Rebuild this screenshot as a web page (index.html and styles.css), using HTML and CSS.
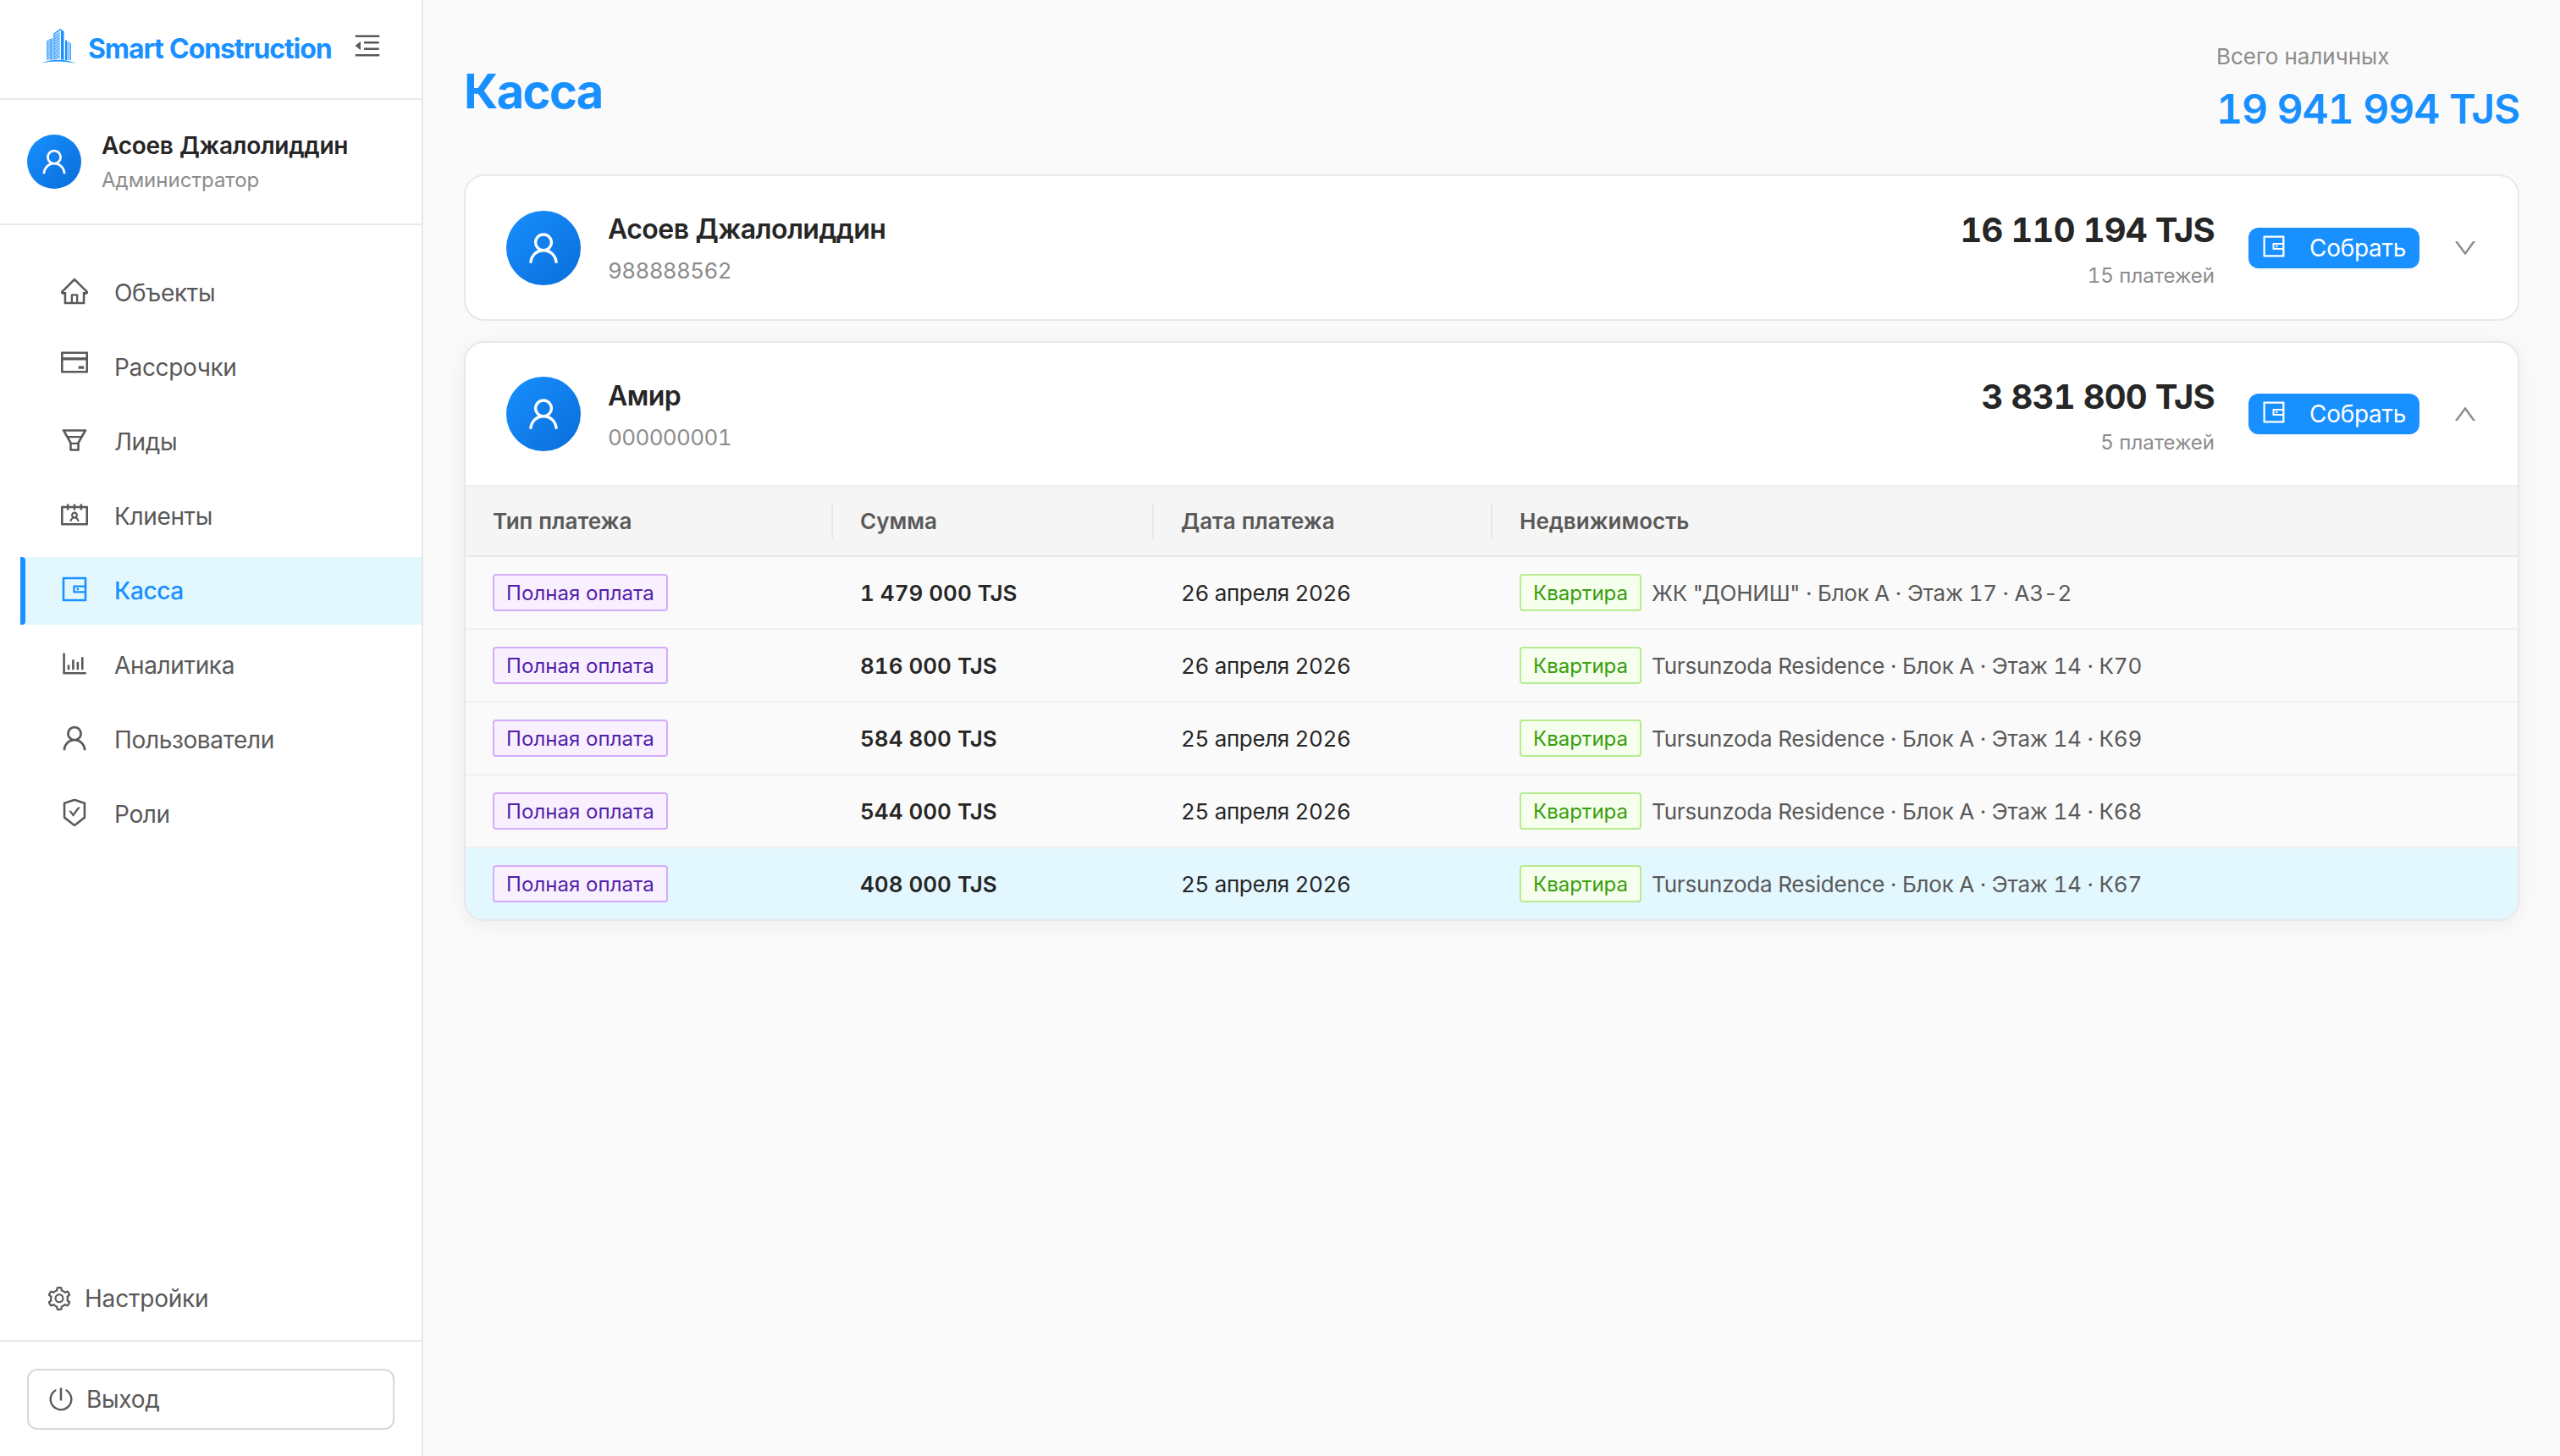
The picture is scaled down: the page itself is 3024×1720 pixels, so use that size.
FILE: index.html
```html
<!DOCTYPE html>
<html lang="ru">
<head>
    <meta charset="UTF-8">
    <meta name="viewport" content="width=device-width, initial-scale=1.0">
    <title>Smart Construction - Касса</title>
    <link rel="stylesheet" href="styles.css">
</head>
<body>

    <!-- иконки -->
    <svg class="sprite" width="0" height="0">
        <symbol id="i-fold" viewBox="64 64 896 896"><path d="M408 442h480c4.400 0 8-3.600 8-8v-56c0-4.400-3.600-8-8-8H408c-4.400 0-8 3.600-8 8v56c0 4.400 3.600 8 8 8zm-8 204c0 4.400 3.600 8 8 8h480c4.400 0 8-3.600 8-8v-56c0-4.400-3.600-8-8-8H408c-4.400 0-8 3.600-8 8v56zm504-486H120c-4.400 0-8 3.600-8 8v56c0 4.400 3.600 8 8 8h784c4.400 0 8-3.600 8-8v-56c0-4.400-3.600-8-8-8zm0 632H120c-4.400 0-8 3.600-8 8v56c0 4.400 3.600 8 8 8h784c4.400 0 8-3.600 8-8v-56c0-4.400-3.600-8-8-8zM115.400 518.900L271.700 642c5.800 4.600 14.400.5 14.400-6.900V388.900c0-7.400-8.500-11.500-14.400-6.900L115.400 505.100a8.740 8.740 0 000 13.800z"/></symbol>
        <symbol id="i-home" viewBox="64 64 896 896"><path d="M946.5 505L560.1 118.8l-25.9-25.9a31.5 31.5 0 00-44.4 0L77.5 505a63.9 63.9 0 00-18.800 46c.4 35.2 29.7 63.3 64.9 63.3h42.5V940h691.8V614.3h43.400c17.100 0 33.200-6.700 45.300-18.800a63.6 63.6 0 0018.700-45.300c0-17-6.700-33.100-18.800-45.200zM568 868H456V664h112v204zm217.900-325.700V868H632V640c0-22.100-17.900-40-40-40H432c-22.100 0-40 17.900-40 40v228H238.100V542.300h-96l370-369.700 23.100 23.100L882 542.300h-96.100z"/></symbol>
        <symbol id="i-card" viewBox="64 64 896 896"><path d="M928 160H96c-17.700 0-32 14.300-32 32v640c0 17.700 14.300 32 32 32h832c17.700 0 32-14.300 32-32V192c0-17.700-14.300-32-32-32zm-792 72h752v120H136V232zm752 560H136V440h752v352zm-237-64h165c4.400 0 8-3.600 8-8v-72c0-4.400-3.600-8-8-8H651c-4.400 0-8 3.600-8 8v72c0 4.400 3.600 8 8 8z"/></symbol>
        <symbol id="i-funnel" viewBox="64 64 896 896"><path d="M880.1 154H143.9c-24.5 0-39.800 26.700-27.500 48L349 607.400V838c0 17.700 14.200 32 31.800 32h262.400c17.600 0 31.800-14.300 31.800-32V607.400L907.700 202c12.200-21.300-3.100-48-27.600-48zM603.400 798H420.600V650h182.900v148zm9.600-226.600l-8.400 14.600H419.300l-8.400-14.600L334.400 438h355.200L613 571.400zM726.300 374H297.700l-85-148h598.600l-85 148z"/></symbol>
        <symbol id="i-contacts" viewBox="64 64 896 896"><path d="M594.3 601.5a111.8 111.8 0 0029.100-75.500c0-61.900-49.900-112-111.400-112s-111.400 50.100-111.400 112c0 29.100 11 55.500 29.100 75.500a158.09 158.09 0 00-74.600 126.100 8 8 0 008 8.400H407c4.200 0 7.600-3.300 7.900-7.500 3.800-50.600 46-90.500 97.200-90.500s93.400 40 97.200 90.500c.3 4.200 3.700 7.500 7.900 7.500H661a8 8 0 008-8.400c-2.800-53.300-32-99.700-74.700-126.100zM512 578c-28.500 0-51.700-23.300-51.700-52s23.200-52 51.700-52 51.700 23.300 51.700 52-23.200 52-51.700 52zm416-354H768v-56c0-4.400-3.600-8-8-8h-56c-4.400 0-8 3.600-8 8v56H548v-56c0-4.400-3.600-8-8-8h-56c-4.400 0-8 3.600-8 8v56H328v-56c0-4.400-3.600-8-8-8h-56c-4.400 0-8 3.600-8 8v56H96c-17.700 0-32 14.300-32 32v576c0 17.700 14.300 32 32 32h832c17.700 0 32-14.300 32-32V256c0-17.700-14.300-32-32-32zm-40 568H136V296h120v56c0 4.400 3.600 8 8 8h56c4.400 0 8-3.600 8-8v-56h148v56c0 4.400 3.600 8 8 8h56c4.400 0 8-3.600 8-8v-56h148v56c0 4.400 3.600 8 8 8h56c4.400 0 8-3.600 8-8v-56h120v496z"/></symbol>
        <symbol id="i-wallet" viewBox="64 64 896 896"><path d="M880 112H144c-17.700 0-32 14.300-32 32v736c0 17.700 14.300 32 32 32h736c17.700 0 32-14.300 32-32V144c0-17.700-14.300-32-32-32zm-40 464H528V448h312v128zm0 264H184V184h656v200H496c-17.700 0-32 14.300-32 32v192c0 17.700 14.300 32 32 32h344v200zM580 512a40 40 0 1080 0 40 40 0 10-80 0z"/></symbol>
        <symbol id="i-chart" viewBox="64 64 896 896"><path d="M888 792H200V168c0-4.400-3.600-8-8-8h-56c-4.400 0-8 3.600-8 8v688c0 4.400 3.600 8 8 8h752c4.400 0 8-3.600 8-8v-56c0-4.400-3.600-8-8-8zm-600-80h56c4.400 0 8-3.600 8-8V560c0-4.400-3.600-8-8-8h-56c-4.400 0-8 3.600-8 8v144c0 4.400 3.600 8 8 8zm152 0h56c4.400 0 8-3.600 8-8V384c0-4.400-3.600-8-8-8h-56c-4.400 0-8 3.600-8 8v320c0 4.400 3.600 8 8 8zm152 0h56c4.400 0 8-3.600 8-8V462c0-4.400-3.600-8-8-8h-56c-4.400 0-8 3.600-8 8v242c0 4.400 3.600 8 8 8zm152 0h56c4.400 0 8-3.600 8-8V304c0-4.400-3.600-8-8-8h-56c-4.400 0-8 3.600-8 8v400c0 4.400 3.600 8 8 8z"/></symbol>
        <symbol id="i-user" viewBox="64 64 896 896"><path d="M858.5 763.6a374 374 0 00-80.600-119.500 375.63 375.63 0 00-119.500-80.600c-.4-.2-.8-.3-1.200-.5C719.5 518 760 444.700 760 362c0-137-111-248-248-248S264 225 264 362c0 82.700 40.500 156 102.800 201.100-.4.2-.8.3-1.200.5-44.800 18.900-85 46-119.500 80.600a375.63 375.63 0 00-80.600 119.500A371.7 371.7 0 00136 901.800a8 8 0 008 8.200h60c4.400 0 7.900-3.500 8-7.800 2-77.200 33-149.500 87.800-204.300 56.700-56.700 132-87.900 212.200-87.900s155.500 31.200 212.200 87.900C779 752.700 810 825 812 902.200c.1 4.400 3.600 7.800 8 7.800h60a8 8 0 008-8.200c-1-47.800-10.900-94.300-29.500-138.200zM512 534c-45.900 0-89.100-17.900-121.600-50.400S340 407.900 340 362c0-45.900 17.900-89.100 50.400-121.600S466.100 190 512 190s89.100 17.900 121.600 50.400S684 316.100 684 362c0 45.900-17.900 89.100-50.400 121.600S557.900 534 512 534z"/></symbol>
        <symbol id="i-shield" viewBox="64 64 896 896"><path d="M866.9 169.9L527.1 54.1C523 52.7 517.5 52 512 52s-11 .7-15.100 2.100L157.1 169.900c-8.300 2.800-15.100 12.400-15.100 21.200v482.400c0 8.800 5.700 20.400 12.600 25.900L499.300 968c3.500 2.700 8 4.100 12.600 4.100s9.200-1.400 12.600-4.100l344.700-268.600c6.900-5.400 12.600-17 12.600-25.900V191.100c.2-8.800-6.600-18.300-14.900-21.200zM810 654.300L512 886.500 214 654.300V226.700l298-101.600 298 101.600v427.600zm-405.800-201c-3-4.100-7.800-6.600-13-6.600H336c-6.500 0-10.300 7.400-6.500 12.700l126.400 174a16.1 16.1 0 0026 0l212.600-292.700c3.800-5.300 0-12.700-6.500-12.700h-55.200c-5.100 0-10 2.500-13 6.600L468.900 542.400l-64.700-89.100z"/></symbol>
        <symbol id="i-setting" viewBox="64 64 896 896"><path d="M924.8 625.7l-65.500-56c3.100-19 4.700-38.400 4.700-57.800s-1.600-38.800-4.700-57.800l65.500-56a32.03 32.03 0 009.300-35.200l-.9-2.600a443.74 443.74 0 00-79.700-137.900l-1.800-2.100a32.12 32.12 0 00-35.100-9.500l-81.300 28.900c-30-24.600-63.500-44-99.700-57.600l-15.700-85a32.05 32.05 0 00-25.800-25.700l-2.700-.5c-52.100-9.400-106.900-9.400-159 0l-2.700.5a32.05 32.05 0 00-25.800 25.700l-15.800 85.400a351.86 351.86 0 00-99 57.400l-81.900-29.100a32 32 0 00-35.100 9.500l-1.800 2.100a446.02 446.02 0 00-79.700 137.900l-.9 2.600c-4.500 12.500-.8 26.500 9.300 35.200l66.300 56.600c-3.100 18.800-4.600 38-4.600 57.100 0 19.200 1.500 38.400 4.600 57.100L99 625.500a32.03 32.03 0 00-9.300 35.200l.9 2.600c18.100 50.400 44.900 96.900 79.700 137.900l1.800 2.100a32.12 32.12 0 0035.100 9.500l81.900-29.100c29.800 24.500 63.100 43.900 99 57.400l15.800 85.400a32.05 32.05 0 0025.800 25.700l2.700.5a449.4 449.4 0 00159 0l2.700-.5a32.05 32.05 0 0025.800-25.700l15.700-85a350 350 0 0099.700-57.600l81.300 28.900a32 32 0 0035.100-9.500l1.800-2.100c34.800-41.100 61.600-87.500 79.700-137.900l.9-2.600c4.500-12.300.8-26.300-9.300-35zM788.300 465.900c2.500 15.100 3.800 30.600 3.800 46.100s-1.300 31-3.800 46.100l-6.600 40.100 74.700 63.900a370.03 370.03 0 01-42.600 73.600L721 702.800l-31.400 25.800c-23.900 19.600-50.500 35-79.300 45.800l-38.100 14.300-17.900 97a377.5 377.5 0 01-85 0l-17.900-97.200-37.800-14.500c-28.500-10.800-55-26.200-78.700-45.700l-31.400-25.900-93.400 33.200c-17-22.900-31.200-47.600-42.600-73.600l75.500-64.500-6.500-40c-2.400-14.900-3.700-30.300-3.700-45.500 0-15.300 1.200-30.600 3.700-45.500l6.500-40-75.500-64.500c11.300-26.100 25.600-50.700 42.600-73.600l93.400 33.200 31.400-25.900c23.700-19.500 50.200-34.900 78.700-45.700l37.900-14.300 17.900-97.200c28.100-3.200 56.800-3.200 85 0l17.900 97 38.100 14.300c28.700 10.800 55.400 26.200 79.300 45.800l31.400 25.800 92.800-32.900c17 22.900 31.200 47.600 42.600 73.600L781.800 426l6.500 39.900zM512 326c-97.200 0-176 78.800-176 176s78.800 176 176 176 176-78.800 176-176-78.800-176-176-176zm79.200 255.200A111.6 111.6 0 01512 614c-29.900 0-58-11.700-79.200-32.800A111.6 111.6 0 01400 502c0-29.900 11.700-58 32.800-79.200C454 401.600 482.100 390 512 390c29.900 0 58 11.600 79.200 32.800A111.6 111.6 0 01624 502c0 29.900-11.700 58-32.800 79.200z"/></symbol>
        <symbol id="i-power" viewBox="64 64 896 896"><path d="M705.6 124.9a8 8 0 00-11.600 7.200v64.200c0 5.500 2.900 10.600 7.500 13.600a352.2 352.2 0 0162.200 49.800c32.700 32.800 58.400 70.900 76.300 113.300a355 355 0 0127.900 138.700c0 48.100-9.400 94.800-27.900 138.700a355.92 355.92 0 01-76.300 113.300 353.06 353.06 0 01-113.200 76.400c-43.800 18.600-90.500 28-138.500 28s-94.700-9.400-138.500-28a353.06 353.06 0 01-113.200-76.400A355.92 355.92 0 01184 650.400a355 355 0 01-27.900-138.700c0-48.100 9.400-94.800 27.900-138.700 17.900-42.400 43.600-80.500 76.300-113.300 19-19 39.800-35.600 62.200-49.800 4.700-2.900 7.500-8.100 7.500-13.600V132c0-6-6.300-9.800-11.600-7.200C178.500 195.200 82 339.300 80 506.300 77.200 745.100 272.500 943.500 511.200 944c239 .5 432.800-193.300 432.800-432.400 0-169.200-97-315.700-238.400-386.700zM480 560h64c4.400 0 8-3.600 8-8V88c0-4.400-3.600-8-8-8h-64c-4.400 0-8 3.600-8 8v464c0 4.400 3.600 8 8 8z"/></symbol>
        <symbol id="i-down" viewBox="64 64 896 896"><path d="M884 256h-75c-5.100 0-9.900 2.500-12.900 6.600L512 654.200 227.900 262.600c-3-4.100-7.800-6.600-12.900-6.600h-75c-6.500 0-10.300 7.400-6.500 12.700l352.600 486.100c12.800 17.600 39 17.600 51.700 0l352.600-486.100c3.900-5.300.1-12.700-6.400-12.700z"/></symbol>
    </svg>

    <div class="layout">
        <aside class="sidebar">
            <div class="brand">
                <svg class="logo" viewBox="0 0 42 42">
                    <g fill="#8cc6ff">
                        <path d="M7 15l3-1.500V37.500H7zM10.500 13.500l3-1.500V37.500h-3zM29.500 15l3 1.500V38h-3zM33.500 16.500l2.500 1.500v20h-2.500z"/>
                    </g>
                    <path fill="#b9dcff" d="M16 7l7-5v35h-7z"/>
                    <g stroke="#1890ff" fill="none">
                        <path stroke-width=".6" d="M8 15v23M11 13v24.500M33 16v22M35.500 18v20"/>
                        <path stroke-width="1" d="M16.500 10l6-4M16.500 13l6-4M16.500 16l6-4M16.500 19l6-4M16.500 22l6-4M16.500 25l6-4M16.500 28l6-4M16.500 31l6-4M16.500 34l6-4M16.500 37l6-4"/>
                        <path stroke-width="1.200" d="M13.200 12.500v25M15.800 37.500V7L23.500 1.200"/>
                        <path stroke-width="2" d="M30 14.500V38"/>
                    </g>
                    <path fill="#1890ff" d="M23 1l4.500 3v33.500H24V4z"/>
                    <path fill="#1890ff" d="M0 41.500C12 36.500 30 36 42 42 30 38.800 12 38.500 0 41.500z"/>
                </svg>
                <span class="brand-name">Smart Construction</span>
                <svg class="icon fold"><use href="#i-fold"/></svg>
            </div>

            <div class="profile">
                <div class="avatar"><svg class="icon"><use href="#i-user"/></svg></div>
                <div>
                    <div class="profile-name">Асоев Джалолиддин</div>
                    <div class="profile-role">Администратор</div>
                </div>
            </div>

            <nav class="menu">
                <a class="menu-item"><svg class="icon"><use href="#i-home"/></svg><span>Объекты</span></a>
                <a class="menu-item"><svg class="icon raised"><use href="#i-card"/></svg><span>Рассрочки</span></a>
                <a class="menu-item"><svg class="icon"><use href="#i-funnel"/></svg><span>Лиды</span></a>
                <a class="menu-item"><svg class="icon"><use href="#i-contacts"/></svg><span>Клиенты</span></a>
                <a class="menu-item active"><svg class="icon"><use href="#i-wallet"/></svg><span>Касса</span></a>
                <a class="menu-item"><svg class="icon"><use href="#i-chart"/></svg><span>Аналитика</span></a>
                <a class="menu-item"><svg class="icon"><use href="#i-user"/></svg><span>Пользователи</span></a>
                <a class="menu-item"><svg class="icon"><use href="#i-shield"/></svg><span>Роли</span></a>
            </nav>

            <a class="settings"><svg class="icon"><use href="#i-setting"/></svg><span>Настройки</span></a>
            <div class="sidebar-footer">
                <button class="logout"><svg class="icon"><use href="#i-power"/></svg><span>Выход</span></button>
            </div>
        </aside>

        <main class="content">
            <header class="page-header">
                <h1>Касса</h1>
                <div class="total">
                    <div class="total-label">Всего наличных</div>
                    <div class="total-value">19 941 994 TJS</div>
                </div>
            </header>

            <section class="card">
                <div class="card-header">
                    <div class="avatar big"><svg class="icon"><use href="#i-user"/></svg></div>
                    <div class="person">
                        <div class="person-name">Асоев Джалолиддин</div>
                        <div class="person-phone">988888562</div>
                    </div>
                    <div class="sum">
                        <div class="sum-value">16 110 194 TJS</div>
                        <div class="sum-count">15 платежей</div>
                    </div>
                    <button class="collect"><svg class="icon"><use href="#i-wallet"/></svg><span>Собрать</span></button>
                    <svg class="icon arrow"><use href="#i-down"/></svg>
                </div>
            </section>

            <section class="card open">
                <div class="card-header">
                    <div class="avatar big"><svg class="icon"><use href="#i-user"/></svg></div>
                    <div class="person">
                        <div class="person-name">Амир</div>
                        <div class="person-phone">000000001</div>
                    </div>
                    <div class="sum">
                        <div class="sum-value">3 831 800 TJS</div>
                        <div class="sum-count">5 платежей</div>
                    </div>
                    <button class="collect"><svg class="icon"><use href="#i-wallet"/></svg><span>Собрать</span></button>
                    <svg class="icon arrow up"><use href="#i-down"/></svg>
                </div>
                <table class="payments">
                    <colgroup>
                        <col class="col-type">
                        <col class="col-sum">
                        <col class="col-date">
                        <col>
                    </colgroup>
                    <thead>
                        <tr>
                            <th>Тип платежа</th>
                            <th>Сумма</th>
                            <th>Дата платежа</th>
                            <th>Недвижимость</th>
                        </tr>
                    </thead>
                    <tbody>
                        <tr>
                            <td><span class="tag purple">Полная оплата</span></td>
                            <td class="amount">1 479 000 TJS</td>
                            <td>26 апреля 2026</td>
                            <td><div class="estate"><span class="tag green">Квартира</span><span class="place">ЖК "ДОНИШ" · Блок А · Этаж 17 · А3-2</span></div></td>
                        </tr>
                        <tr>
                            <td><span class="tag purple">Полная оплата</span></td>
                            <td class="amount">816 000 TJS</td>
                            <td>26 апреля 2026</td>
                            <td><div class="estate"><span class="tag green">Квартира</span><span class="place">Tursunzoda Residence · Блок А · Этаж 14 · К70</span></div></td>
                        </tr>
                        <tr>
                            <td><span class="tag purple">Полная оплата</span></td>
                            <td class="amount">584 800 TJS</td>
                            <td>25 апреля 2026</td>
                            <td><div class="estate"><span class="tag green">Квартира</span><span class="place">Tursunzoda Residence · Блок А · Этаж 14 · К69</span></div></td>
                        </tr>
                        <tr>
                            <td><span class="tag purple">Полная оплата</span></td>
                            <td class="amount">544 000 TJS</td>
                            <td>25 апреля 2026</td>
                            <td><div class="estate"><span class="tag green">Квартира</span><span class="place">Tursunzoda Residence · Блок А · Этаж 14 · К68</span></div></td>
                        </tr>
                        <tr class="hovered">
                            <td><span class="tag purple">Полная оплата</span></td>
                            <td class="amount">408 000 TJS</td>
                            <td>25 апреля 2026</td>
                            <td><div class="estate"><span class="tag green">Квартира</span><span class="place">Tursunzoda Residence · Блок А · Этаж 14 · К67</span></div></td>
                        </tr>
                    </tbody>
                </table>
            </section>
        </main>
    </div>

</body>
</html>
```
FILE: styles.css
```css
* {
    box-sizing: border-box;
}
body {
    margin: 0;
    font-family: Inter, "Liberation Sans", sans-serif;
    font-size: 28px;
    font-variant-numeric: tabular-nums;
    color: #262626;
    background-color: #fafafa;
}
button {
    font: inherit;
    letter-spacing: inherit;
}
.sprite {
    position: absolute;
}
.icon {
    width: 32px;
    height: 32px;
    fill: currentColor;
    flex: none;
}
.layout {
    display: flex;
    height: 1720px;
}

/* sidebar */
.sidebar {
    width: 500px;
    flex: none;
    display: flex;
    flex-direction: column;
    background-color: #fff;
    border-right: 2px solid #e8e8e8;
    color: #595959;
}
.brand {
    height: 118px;
    display: flex;
    align-items: center;
    padding: 0 0 8px 48px;
    border-bottom: 2px solid #e8e8e8;
}
.logo {
    width: 42px;
    height: 42px;
}
.brand-name {
    width: 315px;
    margin-top: 7px;
    padding-left: 14px;
    font-size: 32px;
    font-weight: 700;
    letter-spacing: -1.1px;
    white-space: nowrap;
    color: #1890ff;
}
.fold {
    margin-left: 13px;
}
.profile {
    height: 148px;
    display: flex;
    align-items: center;
    gap: 24px;
    padding: 0 32px;
    border-bottom: 2px solid #e8e8e8;
}
.avatar {
    width: 64px;
    height: 64px;
    flex: none;
    display: flex;
    align-items: center;
    justify-content: center;
    border-radius: 50%;
    color: #fff;
    background: linear-gradient(135deg, #1890ff, #096dd9);
}
.avatar.big {
    width: 88px;
    height: 88px;
}
.avatar.big .icon {
    width: 40px;
    height: 40px;
}
.profile-name {
    padding-top: 2px;
    font-weight: 600;
    line-height: 38px;
    letter-spacing: -0.25px;
    color: #262626;
}
.profile-role {
    margin-top: 4px;
    font-size: 24px;
    line-height: 36px;
    color: #8c8c8c;
}
.menu {
    flex: 1;
    padding: 40px 0 0 24px;
}
.menu-item {
    position: relative;
    height: 80px;
    margin-bottom: 8px;
    display: flex;
    align-items: center;
    padding-left: 48px;
    gap: 31px;
    letter-spacing: -0.35px;
}
.menu-item .icon {
    margin-top: -4px;
}
.menu-item .raised {
    margin-top: -12px;
}
.menu-item.active {
    color: #1890ff;
    background-color: #e3f7ff;
    font-weight: 500;
}
.menu-item.active::before {
    content: "";
    position: absolute;
    left: 0;
    top: 0;
    width: 6px;
    height: 80px;
    border-radius: 0 4px 4px 0;
    background-color: #1890ff;
}
.settings {
    height: 98px;
    display: flex;
    align-items: center;
    gap: 16px;
    padding-left: 56px;
    letter-spacing: -0.2px;
}
.settings .icon,
.logout .icon {
    width: 28px;
    height: 28px;
}
.sidebar-footer {
    padding: 32px 32px 31px;
    border-top: 2px solid #e8e8e8;
}
.logout {
    width: 434px;
    height: 72px;
    display: flex;
    align-items: center;
    gap: 16px;
    padding: 0 0 0 24px;
    border: 2px solid #d9d9d9;
    border-radius: 12px;
    background-color: #fff;
    color: #595959;
    letter-spacing: -0.3px;
}

/* content */
.content {
    flex: 1;
    padding: 48px;
}
.page-header {
    height: 158px;
    display: flex;
    justify-content: space-between;
}
h1 {
    margin: 22px 0 0;
    font-size: 56px;
    font-weight: 700;
    line-height: 76px;
    letter-spacing: -1.6px;
    color: #1890ff;
}
.total-label {
    font-size: 26px;
    line-height: 38px;
    color: #8c8c8c;
}
.total-value {
    margin-top: 11px;
    font-size: 48px;
    font-weight: 600;
    line-height: 64px;
    letter-spacing: -1.1px;
    white-space: nowrap;
    color: #1890ff;
}
.card {
    margin-bottom: 24px;
    border: 2px solid #e8e8e8;
    border-radius: 24px;
    overflow: hidden;
    background-color: #fff;
}
.card.open {
    box-shadow: 0 4px 24px rgba(0, 0, 0, 0.06);
}
.card-header {
    height: 168.600px;
    display: flex;
    align-items: center;
    padding: 1px 48px 0;
}
.person {
    flex: 1;
    margin-left: 32px;
    padding-top: 5px;
}
.person-name {
    font-size: 32px;
    font-weight: 600;
    line-height: 44px;
    letter-spacing: -0.55px;
}
.person-phone {
    margin-top: 6px;
    font-size: 26px;
    line-height: 42px;
    letter-spacing: -0.65px;
    color: #8c8c8c;
}
.sum {
    padding-top: 3px;
    text-align: right;
}
.sum-value {
    font-size: 40px;
    font-weight: 700;
    line-height: 60px;
    letter-spacing: -0.8px;
}
.sum-count {
    margin-top: 4px;
    font-size: 24px;
    line-height: 40px;
    color: #8c8c8c;
}
.collect {
    width: 202px;
    height: 48px;
    margin-left: 40px;
    display: flex;
    align-items: center;
    justify-content: space-between;
    padding: 0 16px;
    border: 0;
    border-radius: 12px;
    background-color: #1890ff;
    color: #fff;
    letter-spacing: -0.3px;
    box-shadow: 0 4px 0 rgba(0, 0, 0, 0.02);
}
.collect .icon {
    width: 28px;
    height: 28px;
    margin-top: -4px;
}
.arrow {
    width: 28px;
    height: 28px;
    margin-left: 40px;
    color: #8c8c8c;
}
.arrow.up {
    transform: rotate(180deg);
}

/* payments */
.payments {
    width: 100%;
    table-layout: fixed;
    border-collapse: separate;
    border-spacing: 0;
    font-size: 26px;
    background-color: #fafafa;
}
.col-type {
    width: 434px;
}
.col-sum {
    width: 379px;
}
.col-date {
    width: 400px;
}
th {
    position: relative;
    height: 85px;
    padding: 0 32px;
    text-align: left;
    font-weight: 600;
    color: #595959;
    background-color: #f5f5f5;
    border-top: 2px solid #f0f0f0;
    border-bottom: 2px solid #e8e8e8;
}
th:not(:last-child)::after {
    content: "";
    position: absolute;
    right: 0;
    top: 20px;
    width: 2px;
    height: 42px;
    background-color: #e8e8e8;
}
td {
    height: 86px;
    padding: 0 32px;
    border-bottom: 2px solid #f0f0f0;
    letter-spacing: -0.35px;
}
tr:last-child td {
    height: 84px;
    border-bottom: 0;
}
.hovered td {
    background-color: #e3f7ff;
}
.amount {
    font-weight: 600;
    letter-spacing: 0;
}
.tag {
    display: inline-flex;
    align-items: center;
    height: 44px;
    padding: 0 14px;
    border: 2px solid;
    border-radius: 4px;
    font-size: 24px;
    vertical-align: middle;
    letter-spacing: 0;
}
.purple {
    color: #531dab;
    background-color: #f9f0ff;
    border-color: #d3adf7;
    letter-spacing: 0.08px;
}
.green {
    color: #389e0d;
    background-color: #f6ffed;
    border-color: #b7eb8f;
}
.estate {
    display: flex;
    align-items: center;
    gap: 12px;
}
.place {
    color: #595959;
    letter-spacing: -0.22px;
    white-space: nowrap;
}
```
